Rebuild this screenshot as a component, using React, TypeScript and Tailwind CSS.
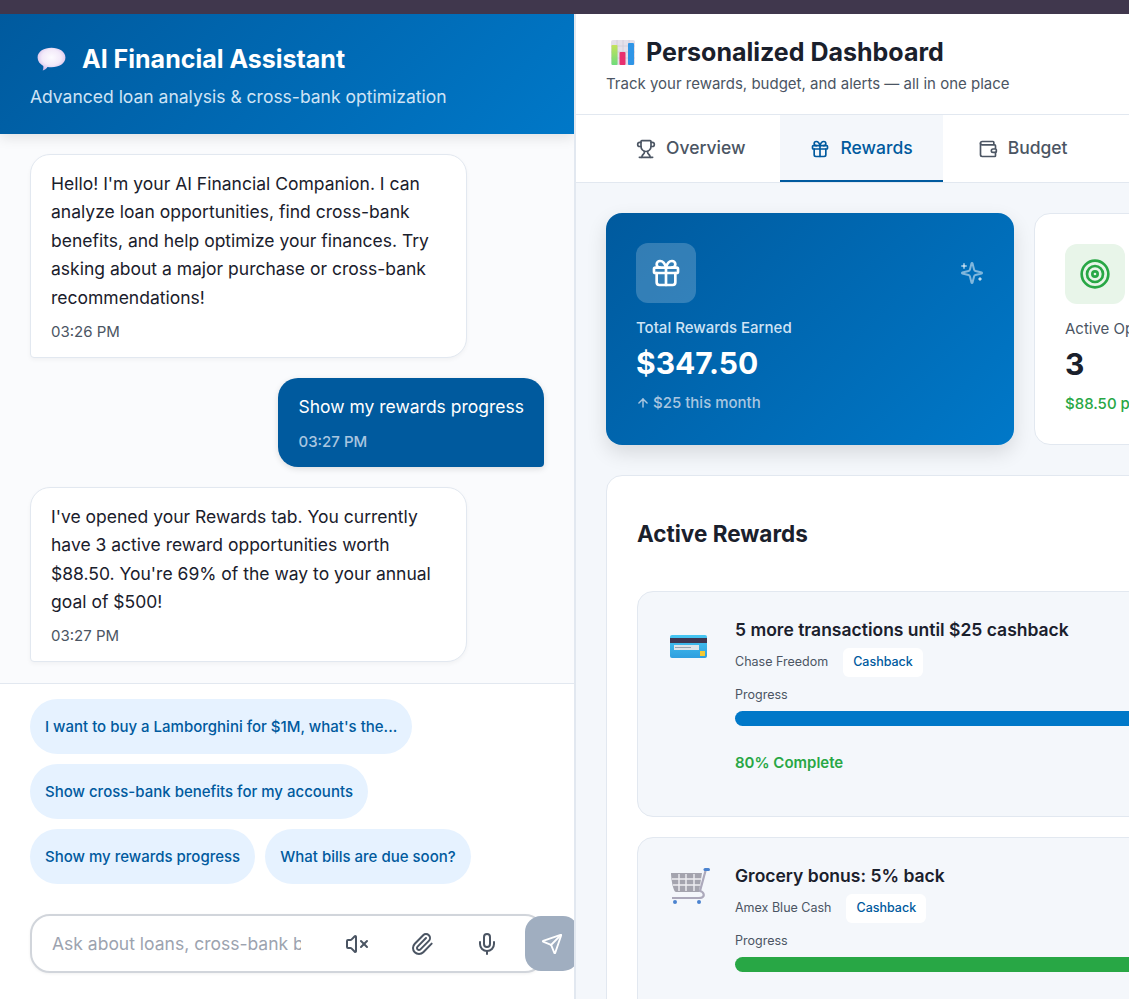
import { Trophy, Gift, Wallet, Target, VolumeX, Paperclip, Mic, Send, ArrowUp } from "lucide-react";

function BubbleEmoji() {
  return (
    <svg width="31" height="26" viewBox="0 0 32 28" className="shrink-0">
      <defs>
        <radialGradient id="bub" cx="0.5" cy="0.42" r="0.62">
          <stop offset="0" stopColor="#fdfbff" />
          <stop offset="0.55" stopColor="#f3eaf9" />
          <stop offset="1" stopColor="#cdb3e6" />
        </radialGradient>
      </defs>
      <path d="M16 2C24 2 31 6 31 12.5S24 23 16 23c-1.500 0-3 0-4.300-.4C10.500 24.500 8.500 26 6.500 26.500c.6-1.500.9-3 .7-5C3.500 19.500 1 16.500 1 12.500 1 6 8 2 16 2Z" fill="url(#bub)" />
    </svg>
  );
}

function ChartEmoji() {
  return (
    <svg width="26" height="27" viewBox="0 0 26 27" className="shrink-0">
      <defs>
        <linearGradient id="greenbar" x1="0" y1="0" x2="0" y2="1">
          <stop offset="0" stopColor="#c4e25c" />
          <stop offset="1" stopColor="#6fdc7c" />
        </linearGradient>
      </defs>
      <rect x="1" y="1" width="24" height="25" rx="2" fill="#e4e0ea" />
      <path d="M1 7h24M1 13h24M1 19h24M7 1v25M13 1v25M19 1v25" stroke="#cfcbd8" strokeWidth="0.8" />
      <rect x="1.500" y="6" width="6" height="20" rx="1" fill="url(#greenbar)" />
      <rect x="9.500" y="13" width="6" height="13" rx="1" fill="#e8306f" />
      <rect x="18" y="4" width="6" height="22" rx="1" fill="#2f95e6" />
    </svg>
  );
}

function CardEmoji() {
  return (
    <svg width="38" height="26" viewBox="0 0 38 26" className="mt-[13px]">
      <defs>
        <linearGradient id="cardg" x1="0" y1="0" x2="0" y2="1">
          <stop offset="0" stopColor="#46c6f2" />
          <stop offset="1" stopColor="#2f9fdf" />
        </linearGradient>
      </defs>
      <rect x="0" y="1" width="37" height="23" rx="2" fill="url(#cardg)" />
      <rect x="0" y="4" width="37" height="5" fill="#3f3550" />
      <rect x="4" y="11" width="25" height="5" fill="#dfe4ea" />
      <rect x="5" y="13" width="16" height="1" fill="#9aa3ad" />
      <rect x="30" y="17" width="5" height="5" fill="#f5c934" />
    </svg>
  );
}

function CartEmoji() {
  return (
    <svg width="40" height="38" viewBox="0 0 40 38">
      <path d="M1 6h31l-3 19H6C3 25 1 11 1 6Z" fill="#a4a4ae" />
      <path d="M9 7v17M16 7v17M24 7v17M2 12h29M3 18h27" stroke="#eeeef2" strokeWidth="1.400" />
      <path d="M36 2l-6 22c4 1 5 5 2 6.500-1 .5-2 .5-3 .5H2" fill="none" stroke="#aca9bb" strokeWidth="2.200" />
      <path d="M35 2.500h3.500" stroke="#4b83cf" strokeWidth="3" strokeLinecap="round" />
      <circle cx="5" cy="35" r="2" fill="#4b83cf" />
      <circle cx="29" cy="35" r="2" fill="#4b83cf" />
    </svg>
  );
}

function StarIcon() {
  return (
    <svg width="24" height="24" viewBox="0 0 24 24" fill="none" stroke="currentColor" strokeWidth="2" strokeLinecap="round" strokeLinejoin="round" className="text-white/50 -scale-x-100">
      <path d="M9.937 15.5A2 2 0 0 0 8.500 14.063l-6.135-1.582a.5.5 0 0 1 0-.962L8.500 9.936A2 2 0 0 0 9.937 8.500l1.582-6.135a.5.5 0 0 1 .963 0L14.063 8.500A2 2 0 0 0 15.500 9.937l6.135 1.581a.5.5 0 0 1 0 .964L15.500 14.063a2 2 0 0 0-1.437 1.437l-1.582 6.135a.5.5 0 0 1-.963 0z" />
      <path d="M20 3v4" />
      <path d="M22 5h-4" />
      <path d="M4 17v2" />
      <path d="M5 18H3" />
    </svg>
  );
}

function Bubble({ lines, time, tight }: { lines: string[]; time: string; tight?: boolean }) {
  return (
    <div className="w-[437px] rounded-[20px] rounded-bl-[4px] border border-[#e2e8f0] bg-white px-5 pt-[15px] pb-[14px] shadow-[0_2px_4px_rgba(0,0,0,0.04)]">
      {lines.map((l) => (
        <div key={l} className="text-[17.5px] leading-[28.4px] whitespace-nowrap text-[#1a202c]">{l}</div>
      ))}
      <div className={`${tight ? "mt-[7px]" : "mt-[8px]"} text-[15px] leading-[23px] text-[#4b5563]`}>{time}</div>
    </div>
  );
}

function Chip({ children }: { children: string }) {
  return (
    <div className="flex h-[55px] items-center rounded-full bg-[#e6f2ff] px-[15px] pt-[2px] text-[15px] font-medium whitespace-nowrap text-[#005a9e]">
      {children}
    </div>
  );
}

function Tab({ icon, label, active }: { icon: React.ReactNode; label: string; active?: boolean }) {
  return (
    <div className={`flex items-center gap-[10px] border-b-2 px-[30px] pt-[2px] text-[17.5px] font-medium ${active ? "border-[#005a9e] bg-[#f4f7fb] text-[#005a9e]" : "border-transparent text-[#4b5563]"}`}>
      {icon}
      {label}
    </div>
  );
}

function RewardItem({ emoji, title, bank, color, pct }: { emoji: React.ReactNode; title: string; bank: string; color: string; pct?: string }) {
  return (
    <div className="flex h-[226px] w-[800px] rounded-2xl border border-[#e2e8f0] bg-[#f4f7fb] pt-[25px] pl-[32px]">
      <div className="flex w-[65px] shrink-0 justify-start pt-[4px]">
        <div>{emoji}</div>
      </div>
      <div className="flex-1 pr-8">
        <div className="text-[17.5px] leading-[26px] font-semibold text-[#1a202c]">{title}</div>
        <div className="mt-[5px] flex h-[29px] items-center gap-[15px] text-[12.5px] text-[#4b5563]">
          <span>{bank}</span>
          <span className="flex h-[29px] items-center rounded-md bg-white px-[10px] font-medium text-[#005a9e]">Cashback</span>
        </div>
        <div className="mt-[8px] text-[12.5px] leading-[20px] text-[#4b5563]">Progress</div>
        <div className={`mt-[6px] h-[15px] rounded-full ${color}`} />
        {pct && <div className="mt-[26px] text-[15px] leading-[22px] font-semibold text-[#28a745]">{pct}</div>}
      </div>
    </div>
  );
}

export default function App() {
  return (
    <div className="flex h-[999px] w-[1129px] flex-col overflow-hidden bg-white font-['Inter',sans-serif]">
      <div className="h-[14px] shrink-0 bg-[#40374d]" />
      <div className="flex min-h-0 flex-1">
        <aside className="flex w-[576px] shrink-0 flex-col overflow-hidden border-r-2 border-[#e2e8f0] bg-white">
          <header className="relative h-[120px] shrink-0 bg-[linear-gradient(135deg,#005a9e,#0078c8)] px-[30px] pt-[27px] shadow-[0_4px_12px_rgba(0,0,0,0.1)]">
            <div className="flex items-center gap-[15px] pl-[6px]">
              <BubbleEmoji />
              <h1 className="text-[25px] leading-[36px] font-bold text-white">AI Financial Assistant</h1>
            </div>
            <p className="mt-[8px] text-[17.5px] leading-[24px] text-[#cfe3f5]">Advanced loan analysis &amp; cross-bank optimization</p>
          </header>
          <div className="flex min-h-0 flex-1 flex-col gap-5 bg-[#fafbfd] px-[30px] pt-5">
            <Bubble
              time="03:26 PM"
              lines={[
                "Hello! I'm your AI Financial Companion. I can",
                "analyze loan opportunities, find cross-bank",
                "benefits, and help optimize your finances. Try",
                "asking about a major purchase or cross-bank",
                "recommendations!",
              ]}
            />
            <div className="self-end rounded-[20px] rounded-br-[4px] bg-[#005a9e] px-5 pt-[15px] pb-[13.6px] shadow-[0_2px_6px_rgba(0,0,0,0.12)]">
              <div className="text-[17.5px] leading-[28.4px] text-white">Show my rewards progress</div>
              <div className="mt-[9px] text-[15px] leading-[23px] font-medium text-[#a9c6e0]">03:27 PM</div>
            </div>
            <Bubble
              tight
              time="03:27 PM"
              lines={[
                "I've opened your Rewards tab. You currently",
                "have 3 active reward opportunities worth",
                "$88.50. You're 69% of the way to your annual",
                "goal of $500!",
              ]}
            />
          </div>
          <div className="shrink-0 border-t border-[#e2e8f0] bg-white px-[30px] pt-[15px]">
            <div className="flex flex-col items-start gap-[10px]">
              <Chip>I want to buy a Lamborghini for $1M, what's the...</Chip>
              <Chip>Show cross-bank benefits for my accounts</Chip>
              <div className="flex gap-[10px]">
                <Chip>Show my rewards progress</Chip>
                <Chip>What bills are due soon?</Chip>
              </div>
            </div>
            <div className="mt-[30px] mb-[26px] flex items-center">
              <div className="flex h-[59px] w-[515px] shrink-0 items-center rounded-[20px] border-2 border-[#d1d5db] bg-white pl-5 shadow-[0_1px_3px_rgba(0,0,0,0.06)]">
                <input readOnly placeholder="Ask about loans, cross-bank benefits..." className="w-[249px] bg-transparent p-0 pt-[1px] text-[17.5px] outline-none placeholder:text-[#9ca3af]" />
                <div className="ml-[44px] text-[#4b5563]"><VolumeX size={24} strokeWidth={2} /></div>
                <div className="ml-[41px] text-[#4b5563]"><Paperclip size={24} strokeWidth={2} /></div>
                <div className="ml-[41px] text-[#4b5563]"><Mic size={24} strokeWidth={2} /></div>
              </div>
              <div className="-ml-5 flex h-[55px] w-[54px] shrink-0 items-center justify-center rounded-[16px] bg-[#a0aec0] text-white">
                <Send size={22} />
              </div>
            </div>
          </div>
        </aside>
        <main className="min-w-0 flex-1 overflow-hidden bg-[#f4f7fb]">
          <div className="h-[101px] border-b border-[#e2e8f0] bg-white px-[30px] pt-[20px]">
            <div className="flex items-center gap-[10px] pl-[4px]">
              <ChartEmoji />
              <h2 className="text-[25px] leading-[36px] font-bold text-[#1a202c]">Personalized Dashboard</h2>
            </div>
            <p className="mt-[3px] text-[15px] leading-[22px] text-[#4b5563]">Track your rewards, budget, and alerts — all in one place</p>
          </div>
          <div className="flex h-[68px] gap-[5px] border-b border-[#e2e8f0] bg-white pl-[30px]">
            <Tab icon={<Trophy size={20} />} label="Overview" />
            <Tab active icon={<Gift size={20} />} label="Rewards" />
            <Tab icon={<Wallet size={20} />} label="Budget" />
          </div>
          <div className="px-[30px] pt-[30px]">
            <div className="flex gap-5">
              <div className="h-[232px] w-[408px] shrink-0 rounded-2xl bg-[linear-gradient(135deg,#005a9e,#0078c8)] p-[30px] shadow-[0_8px_20px_rgba(0,0,0,0.12)]">
                <div className="flex items-center justify-between">
                  <div className="flex h-[60px] w-[60px] items-center justify-center rounded-xl bg-white/20 text-white"><Gift size={32} /></div>
                  <StarIcon />
                </div>
                <div className="mt-[15px] text-[15px] leading-[20px] font-medium text-[#cfe3f5]">Total Rewards Earned</div>
                <div className="mt-[3px] text-[30px] leading-[44px] font-bold text-white">$347.50</div>
                <div className="mt-[7px] flex items-center gap-[3px] text-[15px] leading-[22px] font-medium text-[#a9c6e0]"><ArrowUp size={14} strokeWidth={2.5} />$25 this month</div>
              </div>
              <div className="h-[232px] w-[408px] shrink-0 rounded-2xl border border-[#e2e8f0] bg-white p-[30px]">
                <div className="flex h-[60px] w-[60px] items-center justify-center rounded-xl bg-[#e8f5e9] text-[#28a745]"><Target size={32} /></div>
                <div className="mt-[15px] text-[15px] leading-[20px] text-[#4b5563]">Active Opportunities</div>
                <div className="mt-[3px] text-[30px] leading-[44px] font-bold text-[#1a202c]">3</div>
                <div className="mt-[7px] text-[15px] leading-[22px] font-medium text-[#28a745]">$88.50 potential</div>
              </div>
            </div>
            <div className="mt-[30px] w-[860px] rounded-2xl border border-[#e2e8f0] bg-white pt-[30px] pl-[30px]">
              <h3 className="text-[22.5px] leading-[56px] font-bold text-[#1a202c]">Active Rewards</h3>
              <div className="mt-[29px] flex flex-col gap-5">
                <RewardItem emoji={<CardEmoji />} title="5 more transactions until $25 cashback" bank="Chase Freedom" color="bg-[#0078c8]" pct="80% Complete" />
                <RewardItem emoji={<CartEmoji />} title="Grocery bonus: 5% back" bank="Amex Blue Cash" color="bg-[#28a745]" />
              </div>
            </div>
          </div>
        </main>
      </div>
    </div>
  );
}
